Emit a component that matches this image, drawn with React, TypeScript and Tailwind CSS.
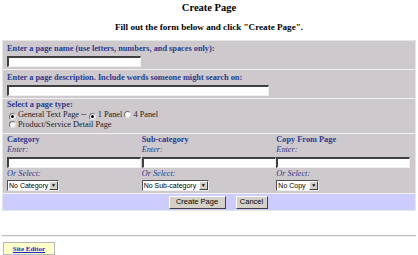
const sans = { fontFamily: '"Liberation Sans", Arial, sans-serif' }

const Radio = ({ on }: { on?: boolean }) => (
  <span className="inline-flex items-center justify-center w-[7px] h-[7px] rounded-full bg-white border border-t-[#707070] border-l-[#707070] border-b-[#e0e0e0] border-r-[#e0e0e0] mr-[2px] align-[-1px]">
    {on && <span className="w-[3px] h-[3px] rounded-full bg-black" />}
  </span>
)

const TextBox = ({ w }: { w: string }) => (
  <div
    className={`${w} h-[11px] bg-white border-t-2 border-l-2 border-t-[#404040] border-l-[#404040] border-b border-r border-b-[#f0f0f0] border-r-[#f0f0f0]`}
  />
)

const Select = ({ label, w }: { label: string; w: string }) => (
  <div
    className={`${w} h-[11px] flex items-center bg-white border border-t-[#505050] border-l-[#505050] border-b-[#f0f0f0] border-r-[#f0f0f0] text-[7px] leading-none text-black`}
    style={sans}
  >
    <span className="flex-1 pl-[1px] whitespace-nowrap">{label}</span>
    <span className="w-[9px] h-[9px] shrink-0 bg-[#d4d0c8] border border-t-white border-l-white border-b-[#404040] border-r-[#404040] flex items-center justify-center text-[5px] leading-none">
      ▼
    </span>
  </div>
)

const Btn = ({ children, w }: { children: string; w: string }) => (
  <button
    className={`${w} h-[13px] bg-[#d4d0c8] border border-t-white border-l-white border-b-[#404040] border-r-[#404040] text-[7.5px] leading-none text-black`}
    style={sans}
  >
    {children}
  </button>
)

const Label = ({ children }: { children: string }) => (
  <div className="text-[8.3px] leading-[11px] font-bold text-[#2a3b8f] whitespace-nowrap">{children}</div>
)

const Sub = ({ children }: { children: string }) => (
  <div className="text-[8.3px] leading-[10px] italic text-[#2a3b8f]">{children}</div>
)

const Column = ({ title, sel, selW }: { title: string; sel: string; selW: string }) => (
  <div className="flex flex-col">
    <Label>{title}</Label>
    <Sub>Enter:</Sub>
    <div className="mt-[2px]">
      <TextBox w="w-[134px]" />
    </div>
    <div className="mt-[1px]">
      <Sub>Or Select:</Sub>
    </div>
    <div className="mt-[1px]">
      <Select label={sel} w={selW} />
    </div>
  </div>
)

export default function App() {
  return (
    <div className="w-[418px] h-[255px] overflow-hidden bg-white text-black font-['Liberation_Serif','Times_New_Roman',serif]">
      <div className="pt-[1px] text-center text-[10.5px] leading-[13px] font-bold">Create Page</div>
      <div className="mt-[7px] text-center text-[9.1px] leading-[13px] font-bold">
        Fill out the form below and click "Create Page".
      </div>

      <div className="mt-[6px] mx-[2px] border border-[#e6e6e6] bg-[#cdc9cd]">
        <div className="px-[4px] pt-[2px] pb-[2px] border-b border-b-[#f2f2f2]">
          <Label>Enter a page name (use letters, numbers, and spaces only):</Label>
          <div className="mt-[2px]">
            <TextBox w="w-[134px]" />
          </div>
        </div>

        <div className="px-[4px] pt-[2px] pb-[2px] border-b border-b-[#f2f2f2]">
          <Label>Enter a page description. Include words someone might search on:</Label>
          <div className="mt-[2px]">
            <TextBox w="w-[262px]" />
          </div>
        </div>

        <div className="px-[4px] pt-[1px] pb-[3px] border-b border-b-[#f2f2f2]">
          <div className="text-[8.3px] leading-[10px] font-bold text-[#2a3b8f]">Select a page type:</div>
          <div className="text-[8.3px] leading-[10px] text-[#222] pl-[2px] whitespace-nowrap">
            <Radio on />
            General Text Page --{' '}
            <Radio on />1 Panel <Radio />4 Panel
          </div>
          <div className="text-[8.3px] leading-[10px] text-[#222] pl-[2px] whitespace-nowrap">
            <Radio />
            Product/Service Detail Page
          </div>
        </div>

        <div className="px-[4px] pt-0 pb-[2px] grid grid-cols-3 border-b border-b-[#f2f2f2]">
          <Column title="Category" sel="No Category" selW="w-[52px]" />
          <Column title="Sub-category" sel="No Sub-category" selW="w-[67px]" />
          <Column title="Copy From Page" sel="No Copy" selW="w-[43px]" />
        </div>

        <div className="bg-[#ccccff] h-[16px] flex items-center justify-center gap-[10px] pl-[18px]">
          <Btn w="w-[57px]">Create Page</Btn>
          <Btn w="w-[32px]">Cancel</Btn>
        </div>
      </div>

      <div className="mt-[24px] mx-[2px] border-t border-t-[#bdbdbd] border-b border-b-[#eeeeee]" />

      <div className="mt-[5px] ml-[3px] w-[52px] h-[13px] bg-[#ffffcc] border border-[#b8b8b8] flex items-start justify-center pt-[2px]">
        <a href="#" className="text-[7px] leading-[8px] font-bold text-[#2222cc] underline">
          Site Editor
        </a>
      </div>
    </div>
  )
}
